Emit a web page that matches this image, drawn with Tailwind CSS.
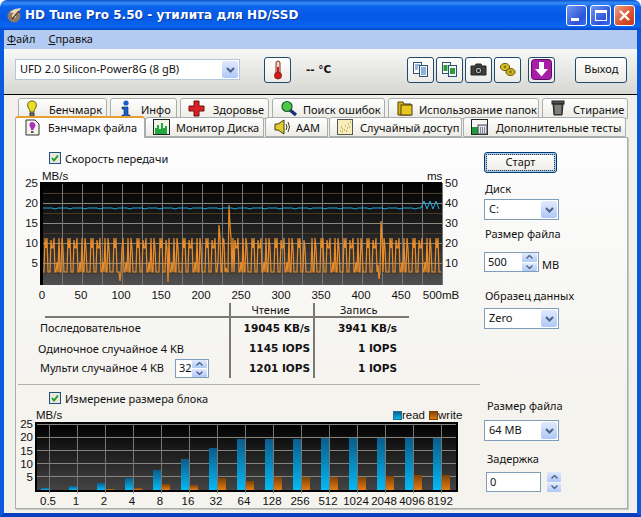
<!DOCTYPE html>
<html lang="ru">
<head>
    <meta charset="UTF-8">
    <title>HD Tune Pro 5.50</title>
    <script src="https://cdn.jsdelivr.net/npm/@tailwindcss/browser@4"></script>
</head>
<body class="bg-white">
<div class="w-[641px] h-[517px] flex flex-col overflow-hidden whitespace-nowrap font-['Noto_Sans',sans-serif] text-[11px] text-[#111]">

    <!-- title bar -->
    <div class="h-[30px] shrink-0 flex items-center pl-[6px] pr-[6px] rounded-t-[7px] bg-[linear-gradient(180deg,#0a53d0_0%,#3a8cf8_10%,#0a62ec_22%,#0558e4_60%,#0b66f0_88%,#0345c8_100%)]">
        <svg class="w-[18px] h-[18px] mr-[1px]" viewBox="0 0 18 18"><circle cx="8" cy="10" r="6.5" fill="#8c7a66"/><circle cx="8" cy="10" r="2" fill="#f4efe2"/><path d="M4 6 L9 3 L15 2 L11 9 Z" fill="#e8d9b8"/><path d="M6 13 L13 5" stroke="#5a3a22" stroke-width="1.5"/></svg>
        <span class="font-['DejaVu_Sans',sans-serif] font-bold text-white text-[12px] tracking-[0.05px] [text-shadow:1px_1px_0_#0a3aa0]">HD Tune Pro 5.50 - утилита для HD/SSD</span>
        <div class="ml-auto flex gap-[3px]">
            <div class="w-[21px] h-[21px] rounded-[3px] border border-white flex items-end pl-[4px] pb-[4px] bg-[linear-gradient(135deg,#6f95f0,#2a55d8_70%,#3f6cec)]"><div class="w-[8px] h-[3px] bg-white"></div></div>
            <div class="w-[21px] h-[21px] rounded-[3px] border border-white flex items-center justify-center bg-[linear-gradient(135deg,#6f95f0,#2a55d8_70%,#3f6cec)]"><div class="w-[12px] h-[11px] border border-white border-t-[3px]"></div></div>
            <div class="w-[21px] h-[21px] rounded-[3px] border border-white flex items-center justify-center bg-[linear-gradient(135deg,#eea084,#d8502a_60%,#c43a14)]">
                <svg class="w-[13px] h-[13px]" viewBox="0 0 13 13"><path d="M2 2 L11 11 M11 2 L2 11" stroke="#fff" stroke-width="2.4"/></svg>
            </div>
        </div>
    </div>

    <div class="flex-1 flex flex-col border-x-4 border-b-4 border-x-[#0a5ae0] border-b-[#0a3fc0] bg-[#f1f0ea] min-h-0">
        <!-- menu -->
        <div class="h-[19px] shrink-0 bg-[#b4cbf1] flex items-center pl-[3px] gap-[13px]">
            <span><span class="underline">Ф</span>айл</span>
            <span><span class="underline">С</span>правка</span>
        </div>

        <!-- toolbar -->
        <div class="h-[46px] shrink-0 border-b border-black bg-[linear-gradient(180deg,#f8f8f6,#d6d6d2)] flex items-center pl-[11px] pb-[4px]">
            <div class="w-[225px] h-[21px] bg-white border border-[#b4c6dc] flex items-center pl-[4px] pr-[1px]">
                <span>UFD 2.0 Silicon-Power8G (8 gB)</span>
                <div class="ml-auto w-[16px] h-[17px] rounded-[2px] bg-[linear-gradient(180deg,#e1eafe,#aec8f7)] flex items-center justify-center">
                    <svg class="w-[9px] h-[6px]" viewBox="0 0 9 6"><path d="M1 1 L4.5 4.5 L8 1" fill="none" stroke="#4d6185" stroke-width="2"/></svg>
                </div>
            </div>
            <button class="ml-[24px] w-[27px] h-[26px] rounded-[3px] border border-[#1f4a6e] bg-[linear-gradient(180deg,#fff,#ecebe6)] flex items-center justify-center">
                <svg class="w-[12px] h-[20px]" viewBox="0 0 12 20"><rect x="4" y="1" width="4" height="13" rx="2" fill="#f2d7c8" stroke="#8a2a20"/><rect x="5" y="7" width="2" height="8" fill="#d81818"/><circle cx="6" cy="15.5" r="3.5" fill="#d81818" stroke="#8a2020"/></svg>
            </button>
            <span class="ml-[15px] font-['DejaVu_Sans',sans-serif] font-bold text-[10.5px]">-- °C</span>

            <div class="ml-[76px] flex gap-[2px]">
                <button class="w-[27px] h-[26px] rounded-[3px] border border-[#1f4a6e] bg-[linear-gradient(180deg,#fff,#ecebe6)] flex items-center justify-center">
                    <svg class="w-[17px] h-[17px]" viewBox="0 0 17 17"><rect x="1.5" y="1.5" width="8" height="11" fill="#fff" stroke="#33506e"/><rect x="7.5" y="4.5" width="8" height="11" fill="#f0f6fc" stroke="#33506e"/><path d="M3 4h5M3 6h3M3 8h3M9 7h5M9 9h5M9 11h5M9 13h5" stroke="#2a70b8"/></svg>
                </button>
                <button class="w-[27px] h-[26px] rounded-[3px] border border-[#1f4a6e] bg-[linear-gradient(180deg,#fff,#ecebe6)] flex items-center justify-center">
                    <svg class="w-[17px] h-[17px]" viewBox="0 0 17 17"><rect x="1.5" y="1.5" width="8" height="11" fill="#fff" stroke="#33506e"/><rect x="7.5" y="4.5" width="8" height="11" fill="#f0f6fc" stroke="#33506e"/><rect x="2.5" y="4" width="4" height="6" fill="#2f9a3c"/><rect x="9" y="7" width="5" height="6" fill="#2f9a3c"/></svg>
                </button>
                <button class="w-[27px] h-[26px] rounded-[3px] border border-[#1f4a6e] bg-[linear-gradient(180deg,#fff,#ecebe6)] flex items-center justify-center">
                    <svg class="w-[17px] h-[15px]" viewBox="0 0 17 15"><path d="M1 4 H5 L6 2 H11 L12 4 H16 V13 H1 Z" fill="#3c3f3c" stroke="#222"/><circle cx="8.5" cy="8.5" r="3.4" fill="#a8b0a8" stroke="#111"/><circle cx="8.5" cy="8.5" r="1.5" fill="#222"/></svg>
                </button>
                <button class="w-[27px] h-[26px] rounded-[3px] border border-[#1f4a6e] bg-[linear-gradient(180deg,#fff,#ecebe6)] flex items-center justify-center">
                    <svg class="w-[18px] h-[16px]" viewBox="0 0 18 16"><ellipse cx="6" cy="5" rx="4.6" ry="3.6" fill="#d8c020" stroke="#6a5a10"/><ellipse cx="11.5" cy="10" rx="4.6" ry="3.6" fill="#c8b018" stroke="#6a5a10"/><circle cx="6" cy="5" r="1.4" fill="#8a7a10"/><circle cx="11.5" cy="10" r="1.4" fill="#8a7a10"/></svg>
                </button>
                <button class="ml-[5px] w-[27px] h-[26px] rounded-[3px] border border-[#1f4a6e] bg-[linear-gradient(180deg,#fff,#ecebe6)] flex items-center justify-center">
                    <svg class="w-[21px] h-[21px]" viewBox="0 0 21 21"><rect x="0.5" y="0.5" width="20" height="20" rx="3" fill="#a81ea8" stroke="#5c0c60"/><path d="M8 3 H13 V10 H17 L10.5 17.5 L4 10 H8 Z" fill="#fff"/></svg>
                </button>
            </div>
            <button class="ml-[20px] w-[52px] h-[26px] rounded-[3px] border border-[#1f4a6e] bg-[linear-gradient(180deg,#fff,#ecebe6)]">Выход</button>
        </div>

        <!-- tabs row 1 -->
        <div class="h-[19px] mt-[3px] shrink-0 flex pl-[14px] gap-[3px]">
            <div class="w-[89px] h-[21px] rounded-t-[3px] border border-[#a8aeb0] bg-[linear-gradient(180deg,#fff,#ecebe5)] flex items-start pt-px pl-[6px] gap-[10px]">
                <svg class="w-[14px] h-[18px]" viewBox="0 0 14 18"><path d="M7 1 C3 1 2 4 3 7 C4 9 5 10 5 12 H9 C9 10 10 9 11 7 C12 4 11 1 7 1 Z" fill="#e8e020" stroke="#5a5a20"/><rect x="5" y="13" width="4" height="3" fill="#777" stroke="#333"/></svg><span class="pt-[2px]">Бенчмарк</span>
            </div>
            <div class="w-[67px] h-[21px] rounded-t-[3px] border border-[#a8aeb0] bg-[linear-gradient(180deg,#fff,#ecebe5)] flex items-start pt-px pl-[9px] gap-[9px]">
                <svg class="w-[12px] h-[18px]" viewBox="0 0 12 18"><circle cx="6" cy="3" r="2.6" fill="#1a5fc8"/><path d="M2 7 H8 V15 H10 V17 H2 V15 H4 V9 H2 Z" fill="#1a5fc8" stroke="#0c2a60" stroke-width="0.6"/></svg><span class="pt-[2px]">Инфо</span>
            </div>
            <div class="w-[89px] h-[21px] rounded-t-[3px] border border-[#a8aeb0] bg-[linear-gradient(180deg,#fff,#ecebe5)] flex items-start pt-px pl-[7px] gap-[8px]">
                <svg class="w-[17px] h-[17px]" viewBox="0 0 17 17"><path d="M6 1 H11 V6 H16 V11 H11 V16 H6 V11 H1 V6 H6 Z" fill="#d81f26" stroke="#701010"/></svg><span class="pt-[2px]">Здоровье</span>
            </div>
            <div class="w-[113px] h-[21px] rounded-t-[3px] border border-[#a8aeb0] bg-[linear-gradient(180deg,#fff,#ecebe5)] flex items-start pt-px pl-[7px] gap-[5px]">
                <svg class="w-[18px] h-[17px]" viewBox="0 0 18 17"><path d="M10 10 L16 15" stroke="#1a2f78" stroke-width="3.4"/><circle cx="7" cy="6.5" r="5" fill="#4cc84c" stroke="#1c5c2c" stroke-width="1.2"/></svg><span class="pt-[2px]">Поиск ошибок</span>
            </div>
            <div class="w-[151px] h-[21px] rounded-t-[3px] border border-[#a8aeb0] bg-[linear-gradient(180deg,#fff,#ecebe5)] flex items-start pt-px pl-[8px] gap-[6px]">
                <svg class="w-[16px] h-[16px]" viewBox="0 0 16 16"><path d="M1 2 H6 L7 4 H14 V15 H1 Z" fill="#d8b810" stroke="#4a3c10"/><rect x="4" y="5" width="11" height="10" fill="#e8c820" stroke="#4a3c10"/></svg><span class="pt-[2px]">Использование папок</span>
            </div>
            <div class="w-[86px] h-[21px] rounded-t-[3px] border border-[#a8aeb0] bg-[linear-gradient(180deg,#fff,#ecebe5)] flex items-start pt-px pl-[8px] gap-[8px]">
                <svg class="w-[14px] h-[16px]" viewBox="0 0 14 16"><rect x="1" y="1" width="12" height="3" fill="#555" stroke="#222"/><path d="M2 4 H12 L11 15 H3 Z" fill="#555" stroke="#222"/><path d="M5 5 V14 M7 5 V14 M9 5 V14" stroke="#aaa"/></svg><span class="pt-[2px]">Стирание</span>
            </div>
        </div>

        <!-- tabs row 2 -->
        <div class="h-[20px] shrink-0 flex items-end pl-[11px] relative z-10">
            <div class="w-[130px] h-[22px] -mb-px rounded-t-[3px] border-x border-[#a8aeb0] border-t-2 border-t-[#e8a030] bg-[#fcfcfd] flex items-start pl-[9px] gap-[8px] pt-px">
                <svg class="w-[15px] h-[17px]" viewBox="0 0 15 17"><path d="M1 1 H10 L14 5 V16 H1 Z" fill="#f4f4e8" stroke="#333"/><path d="M7 3 C4.5 3 4 6 5 8 C6 9 6 10 6 11 H8.5 C8.5 10 9 9 10 8 C11 6 10 3 7 3 Z" fill="#b02cc0"/><rect x="6" y="12" width="2.5" height="2" fill="#555"/></svg><span class="pt-px">Бэнчмарк файла</span>
            </div>
            <div class="w-[119px] h-[20px] rounded-t-[3px] border border-[#a8aeb0] bg-[linear-gradient(180deg,#fff,#ecebe5)] flex items-start pl-[7px] gap-[6px]">
                <svg class="w-[17px] h-[16px] mt-px" viewBox="0 0 17 16"><rect x="0.5" y="0.5" width="16" height="15" fill="#f2f2e8" stroke="#222"/><path d="M2 15 V9 H4 V6 H6 V10 H8 V4 H10 V9 H12 V7 H14 V15 Z" fill="#22a83c"/></svg><span class="pt-[2px]">Монитор Диска</span>
            </div>
            <div class="ml-px w-[63px] h-[20px] rounded-t-[3px] border border-[#a8aeb0] bg-[linear-gradient(180deg,#fff,#ecebe5)] flex items-start pl-[8px] gap-[5px]">
                <svg class="w-[17px] h-[16px] mt-px" viewBox="0 0 17 16"><path d="M1 5 H4 L10 1 V15 L4 11 H1 Z" fill="#e0cc30" stroke="#443c10"/><path d="M12 5 Q14 8 12 11 M14 3 Q17 8 14 13" fill="none" stroke="#443c10"/></svg><span class="pt-[2px]">ААМ</span>
            </div>
            <div class="ml-px w-[133px] h-[20px] rounded-t-[3px] border border-[#a8aeb0] bg-[linear-gradient(180deg,#fff,#ecebe5)] flex items-start pl-[7px] gap-[7px]">
                <svg class="w-[16px] h-[16px] mt-px" viewBox="0 0 16 16"><rect x="0.5" y="0.5" width="15" height="15" fill="#f8eebc" stroke="#555"/><path d="M3 12h1M5 10h1M7 11h1M8 7h1M10 9h1M11 5h1M13 3h1M5 13h1M9 12h1M12 8h1M4 8h1" stroke="#a87c30"/></svg><span class="pt-[2px]">Случайный доступ</span>
            </div>
            <div class="ml-px w-[163px] h-[20px] rounded-t-[3px] border border-[#a8aeb0] bg-[linear-gradient(180deg,#fff,#ecebe5)] flex items-start pl-[7px] gap-[8px]">
                <svg class="w-[17px] h-[16px] mt-px" viewBox="0 0 17 16"><rect x="0.5" y="0.5" width="16" height="15" fill="#f4f4f0" stroke="#222"/><rect x="1" y="8" width="6" height="7" fill="#1f9c3a"/><rect x="7" y="6" width="9" height="9" fill="#e0e0e8" stroke="#445"/><path d="M9 9h1M11 9h1M13 9h1M9 11h1M11 11h1M13 11h1M9 13h1M11 13h1M13 13h1" stroke="#334"/></svg><span class="pt-[2px]">Дополнительные тесты</span>
            </div>
        </div>

        <!-- panel -->
        <div class="ml-[11px] w-[613px] h-[372px] shrink-0 border border-[#a8aeb0] shadow-[1px_1px_0_#c8c8c0] bg-[linear-gradient(180deg,#fdfdfe,#f4f3ee_70%)] flex">
            <!-- left side -->
            <div class="w-[464px] shrink-0">
                <div class="h-[32px] pt-[14px] pl-[33px] flex items-start gap-[4px]">
                    <div class="w-[12px] h-[12px] border border-[#1c5180] bg-[#e8e8e0] flex items-center justify-center">
                        <svg class="w-[10px] h-[10px]" viewBox="0 0 10 10"><path d="M2 5 L4 7.5 L8 2.5" fill="none" stroke="#21a121" stroke-width="2"/></svg>
                    </div>
                    <span class="leading-[13px]">Скорость передачи</span>
                </div>

                <svg id="transfer-chart" class="block w-[464px] h-[133px] overflow-visible font-['Liberation_Sans',sans-serif]" viewBox="16 170 464 133">
                    <defs>
                        <linearGradient id="plot-bg" x1="0" y1="0" x2="0" y2="1"><stop offset="0" stop-color="#000"/><stop offset="0.6" stop-color="#2a2a2a"/><stop offset="1" stop-color="#505050"/></linearGradient>
                    </defs>
                    <rect x="42" y="182" width="400" height="103" fill="url(#plot-bg)"/>
                    <g id="transfer-grid"></g>
                    <polyline id="transfer-write" fill="none" stroke="#ea8c28" stroke-width="1.2"/>
                    <polyline id="transfer-read" fill="none" stroke="#28a8d8" stroke-width="1"/>
                    <rect x="40" y="182" width="3" height="103" fill="#000"/><rect x="42" y="182" width="400" height="2" fill="#000"/>
                    <g fill="#111" font-size="11.5">
                        <text x="42" y="180">MB/s</text><text x="427" y="180">ms</text>
                        <g text-anchor="end"><text x="38" y="187">25</text><text x="38" y="207">20</text><text x="38" y="227">15</text><text x="38" y="247">10</text><text x="38" y="267">5</text></g>
                        <text x="445" y="187">50</text><text x="445" y="207">40</text><text x="445" y="227">30</text><text x="445" y="247">20</text><text x="445" y="267">10</text>
                        <g text-anchor="middle"><text x="42" y="299">0</text><text x="81" y="299">50</text><text x="121" y="299">100</text><text x="161" y="299">150</text><text x="201" y="299">200</text><text x="241" y="299">250</text><text x="281" y="299">300</text><text x="321" y="299">350</text><text x="361" y="299">400</text><text x="401" y="299">450</text><text x="441" y="299">500mB</text></g>
                    </g>
                </svg>

                <!-- results table -->
                <div class="ml-[22px] grid grid-cols-[191px_84px_96px] grid-rows-[15px_21px_20px_19px] items-stretch">
                    <div class="ml-[7px] border-b-2 border-[#7a7a70]"></div>
                    <div class="border-l-2 border-b-2 border-[#7a7a70] text-center pr-[3px] leading-[13px]">Чтение</div>
                    <div class="border-l-2 border-b-2 border-[#7a7a70] pl-[25px] leading-[13px]">Запись</div>

                    <div class="pl-[2px] flex items-center">Последовательное</div>
                    <div class="border-l-2 border-[#7a7a70] flex items-center justify-end pr-[3px] font-bold font-['DejaVu_Sans',sans-serif] text-[10.5px]">19045 KB/s</div>
                    <div class="border-l-2 border-[#7a7a70] flex items-center justify-end pr-[12px] font-bold font-['DejaVu_Sans',sans-serif] text-[10.5px]">3941 KB/s</div>

                    <div class="flex items-center">Одиночное случайное 4 KB</div>
                    <div class="border-l-2 border-[#7a7a70] flex items-center justify-end pr-[3px] font-bold font-['DejaVu_Sans',sans-serif] text-[10.5px]">1145 IOPS</div>
                    <div class="border-l-2 border-[#7a7a70] flex items-center justify-end pr-[12px] font-bold font-['DejaVu_Sans',sans-serif] text-[10.5px]">1 IOPS</div>

                    <div class="pl-[2px] flex items-center justify-between pr-[20px]">
                        <span>Мульти случайное 4 KB</span>
                        <div class="w-[34px] h-[19px] border border-[#7f9db9] bg-white flex items-center pl-[3px] pr-px">
                            <span>32</span>
                            <div class="ml-auto w-[15px] h-[17px] flex flex-col gap-px">
                                <div class="flex-1 rounded-[1px] bg-[linear-gradient(180deg,#e1eafe,#aec8f7)] flex items-center justify-center"><svg class="w-[7px] h-[4px]" viewBox="0 0 7 4"><path d="M0.5 3.5 L3.5 0.5 L6.5 3.5" fill="none" stroke="#4d6185" stroke-width="1.4"/></svg></div>
                                <div class="flex-1 rounded-[1px] bg-[linear-gradient(180deg,#e1eafe,#aec8f7)] flex items-center justify-center"><svg class="w-[7px] h-[4px]" viewBox="0 0 7 4"><path d="M0.5 0.5 L3.5 3.5 L6.5 0.5" fill="none" stroke="#4d6185" stroke-width="1.4"/></svg></div>
                            </div>
                        </div>
                    </div>
                    <div class="border-l-2 border-[#7a7a70] flex items-center justify-end pr-[3px] font-bold font-['DejaVu_Sans',sans-serif] text-[10.5px]">1201 IOPS</div>
                    <div class="border-l-2 border-[#7a7a70] flex items-center justify-end pr-[12px] font-bold font-['DejaVu_Sans',sans-serif] text-[10.5px]">1 IOPS</div>
                </div>

                <div class="mt-[6px] ml-[2px] h-px bg-[#b0b0a4]"></div>

                <div class="h-[23px] pt-[7px] pl-[33px] flex items-start gap-[4px]">
                    <div class="w-[12px] h-[12px] border border-[#1c5180] bg-[#e8e8e0] flex items-center justify-center">
                        <svg class="w-[10px] h-[10px]" viewBox="0 0 10 10"><path d="M2 5 L4 7.5 L8 2.5" fill="none" stroke="#21a121" stroke-width="2"/></svg>
                    </div>
                    <span class="leading-[13px]">Измерение размера блока</span>
                </div>

                <svg id="block-chart" class="block w-[464px] h-[100px] overflow-visible font-['Liberation_Sans',sans-serif]" viewBox="16 408 464 100">
                    <defs>
                        <linearGradient id="block-bg" x1="0" y1="0" x2="0" y2="1"><stop offset="0" stop-color="#000"/><stop offset="1" stop-color="#444"/></linearGradient>
                        <linearGradient id="read-bar" x1="0" y1="0" x2="0" y2="1"><stop offset="0" stop-color="#0a5c8a"/><stop offset="1" stop-color="#04baf6"/></linearGradient>
                        <linearGradient id="write-bar" x1="0" y1="0" x2="0" y2="1"><stop offset="0" stop-color="#7c4206"/><stop offset="1" stop-color="#e67c12"/></linearGradient>
                    </defs>
                    <rect x="35" y="422" width="423" height="70" fill="#000"/>
                    <rect x="37" y="424" width="419" height="66" fill="url(#block-bg)"/>
                    <g id="block-grid"></g>
                    <g id="block-bars"></g>
                    <g fill="#111" font-size="11.5">
                        <text x="36" y="419">MB/s</text>
                        <rect x="393.5" y="411.5" width="8" height="8" fill="url(#read-bar)" stroke="#2a6c90"/><text x="402" y="419">read</text>
                        <rect x="429.5" y="411.5" width="8" height="8" fill="url(#write-bar)" stroke="#7c4206"/><text x="438" y="419">write</text>
                        <g text-anchor="end"><text x="33" y="428">25</text><text x="33" y="441">20</text><text x="33" y="455">15</text><text x="33" y="468">10</text><text x="33" y="481">5</text></g>
                        <g id="block-labels" text-anchor="middle"></g>
                    </g>
                </svg>
            </div>

            <!-- right side -->
            <div class="flex-1 flex flex-col pl-[4px] items-start">
                <button class="mt-[14px] w-[73px] h-[21px] rounded-[3px] border border-[#003c74] bg-[linear-gradient(180deg,#fff,#ecebe6)] shadow-[inset_0_0_0_2px_#a6caf0] outline-1 outline-dotted -outline-offset-3 outline-[#333]">Старт</button>

                <span class="mt-[9px] ml-px leading-[13px]">Диск</span>
                <div class="mt-[4px] w-[75px] h-[21px] bg-white border border-[#7f9db9] flex items-center pl-[4px] pr-px">
                    <span>C:</span>
                    <div class="ml-auto w-[16px] h-[17px] rounded-[2px] bg-[linear-gradient(180deg,#e1eafe,#aec8f7)] flex items-center justify-center"><svg class="w-[9px] h-[6px]" viewBox="0 0 9 6"><path d="M1 1 L4.5 4.5 L8 1" fill="none" stroke="#4d6185" stroke-width="2"/></svg></div>
                </div>

                <span class="mt-[7px] ml-px leading-[13px]">Размер файла</span>
                <div class="mt-[12px] flex items-end gap-[3px]">
                    <div class="w-[55px] h-[20px] bg-white border border-[#7f9db9] flex items-center pl-[3px] pr-px">
                        <span>500</span>
                        <div class="ml-auto w-[15px] h-[18px] flex flex-col gap-px">
                            <div class="flex-1 rounded-[1px] bg-[linear-gradient(180deg,#e1eafe,#aec8f7)] flex items-center justify-center"><svg class="w-[7px] h-[4px]" viewBox="0 0 7 4"><path d="M0.5 3.5 L3.5 0.5 L6.5 3.5" fill="none" stroke="#4d6185" stroke-width="1.4"/></svg></div>
                            <div class="flex-1 rounded-[1px] bg-[linear-gradient(180deg,#e1eafe,#aec8f7)] flex items-center justify-center"><svg class="w-[7px] h-[4px]" viewBox="0 0 7 4"><path d="M0.5 0.5 L3.5 3.5 L6.5 0.5" fill="none" stroke="#4d6185" stroke-width="1.4"/></svg></div>
                        </div>
                    </div>
                    <span class="leading-[15px]">MB</span>
                </div>

                <span class="mt-[17px] ml-px leading-[13px]">Образец данных</span>
                <div class="mt-[6px] w-[75px] h-[21px] bg-white border border-[#7f9db9] flex items-center pl-[4px] pr-px">
                    <span>Zero</span>
                    <div class="ml-auto w-[16px] h-[17px] rounded-[2px] bg-[linear-gradient(180deg,#e1eafe,#aec8f7)] flex items-center justify-center"><svg class="w-[9px] h-[6px]" viewBox="0 0 9 6"><path d="M1 1 L4.5 4.5 L8 1" fill="none" stroke="#4d6185" stroke-width="2"/></svg></div>
                </div>

                <span class="mt-[70px] ml-[3px] leading-[13px]">Размер файла</span>
                <div class="mt-[8px] w-[75px] h-[21px] bg-white border border-[#7f9db9] flex items-center pl-[4px] pr-px">
                    <span>64 MB</span>
                    <div class="ml-auto w-[16px] h-[17px] rounded-[2px] bg-[linear-gradient(180deg,#e1eafe,#aec8f7)] flex items-center justify-center"><svg class="w-[9px] h-[6px]" viewBox="0 0 9 6"><path d="M1 1 L4.5 4.5 L8 1" fill="none" stroke="#4d6185" stroke-width="2"/></svg></div>
                </div>

                <span class="mt-[11px] ml-[3px] leading-[13px]">Задержка</span>
                <div class="mt-[7px] ml-[2px] flex gap-[6px]">
                    <div class="w-[55px] h-[20px] bg-white border border-[#7f9db9] flex items-center pl-[3px]">0</div>
                    <div class="w-[14px] h-[20px] flex flex-col gap-px">
                        <div class="flex-1 rounded-[1px] bg-[linear-gradient(180deg,#e1eafe,#aec8f7)] flex items-center justify-center"><svg class="w-[7px] h-[4px]" viewBox="0 0 7 4"><path d="M0.5 3.5 L3.5 0.5 L6.5 3.5" fill="none" stroke="#4d6185" stroke-width="1.4"/></svg></div>
                        <div class="flex-1 rounded-[1px] bg-[linear-gradient(180deg,#e1eafe,#aec8f7)] flex items-center justify-center"><svg class="w-[7px] h-[4px]" viewBox="0 0 7 4"><path d="M0.5 0.5 L3.5 3.5 L6.5 0.5" fill="none" stroke="#4d6185" stroke-width="1.4"/></svg></div>
                    </div>
                </div>
            </div>
        </div>
    </div>
</div>

<script>
    const svgNs = 'http://www.w3.org/2000/svg';
    const addLine = (parent, x1, y1, x2, y2, color) => {
        const line = document.createElementNS(svgNs, 'line');
        line.setAttribute('x1', x1); line.setAttribute('y1', y1);
        line.setAttribute('x2', x2); line.setAttribute('y2', y2);
        line.setAttribute('stroke', color);
        parent.appendChild(line);
    };

    // transfer chart grid
    const grid = document.getElementById('transfer-grid');
    [193, 213, 233, 253, 273].forEach(y => addLine(grid, 42, y + 0.5, 442, y + 0.5, '#4a3a28'));
    [183, 203, 223, 243, 263].forEach(y => addLine(grid, 42, y + 0.5, 442, y + 0.5, '#8a8a80'));
    for (let x = 42; x <= 442; x += 20) addLine(grid, x + 0.5, 183, x + 0.5, 285, '#777');

    // read line
    let readPoints = [];
    for (let x = 43; x <= 441; x += 3) {
        let y = 208 + (x * 7 % 5 === 0 ? 1 : 0);
        if (x > 422) y = (x - 422) % 6 < 3 ? 201 : 209;
        readPoints.push(x + ',' + y);
    }
    document.getElementById('transfer-read').setAttribute('points', readPoints.join(' '));

    // write line: repeating bursts, with a few one-off spikes and dips
    const burst = [272, 272, 238, 248, 238, 272, 272, 272, 240, 248, 248, 238, 272, 272, 262, 272, 238, 272, 272, 238, 248, 272, 272];
    const spikes = { 219: 225, 220: 237, 224: 240, 229: 205, 230: 225, 233: 238, 381: 221, 382: 238, 120: 281, 168: 282, 379: 279, 378: 265, 226: 268 };
    let writePoints = [];
    for (let x = 43; x <= 441; x++) {
        let y = burst[(x - 43) % burst.length];
        if (x > 116 && x < 122) y = 272;
        if (x > 305 && x < 312) y = 272;
        if (spikes[x]) y = spikes[x];
        writePoints.push(x + ',' + y);
    }
    document.getElementById('transfer-write').setAttribute('points', writePoints.join(' '));

    // block size chart
    const blockGrid = document.getElementById('block-grid');
    [424, 437, 450, 463, 476].forEach(y => addLine(blockGrid, 37, y + 0.5, 456, y + 0.5, '#85857c'));
    const sizes = ['0.5', '1', '2', '4', '8', '16', '32', '64', '128', '256', '512', '1024', '2048', '4096', '8192'];
    const readTops = [488, 486, 483, 478, 470, 459, 448, 439, 439, 439, 438, 438, 438, 438, 438];
    const writeTops = [490, 490, 489, 488, 484, 485, 478, 481, 477, 477, 477, 477, 476, 475, 475];
    const bars = document.getElementById('block-bars');
    const labels = document.getElementById('block-labels');
    const addBar = (x, top, fill) => {
        const rect = document.createElementNS(svgNs, 'rect');
        rect.setAttribute('x', x); rect.setAttribute('y', top);
        rect.setAttribute('width', 8); rect.setAttribute('height', Math.max(490 - top, 0));
        rect.setAttribute('fill', fill);
        bars.appendChild(rect);
    };
    sizes.forEach((size, i) => {
        const x = 49 + i * 28;
        addLine(blockGrid, x + 0.5, 424, x + 0.5, 493, '#777');
        addBar(x - 8, readTops[i], 'url(#read-bar)');
        addBar(x + 1, writeTops[i], 'url(#write-bar)');
        const label = document.createElementNS(svgNs, 'text');
        label.setAttribute('x', x - 1); label.setAttribute('y', 505);
        label.textContent = size;
        labels.appendChild(label);
    });
</script>
</body>
</html>
